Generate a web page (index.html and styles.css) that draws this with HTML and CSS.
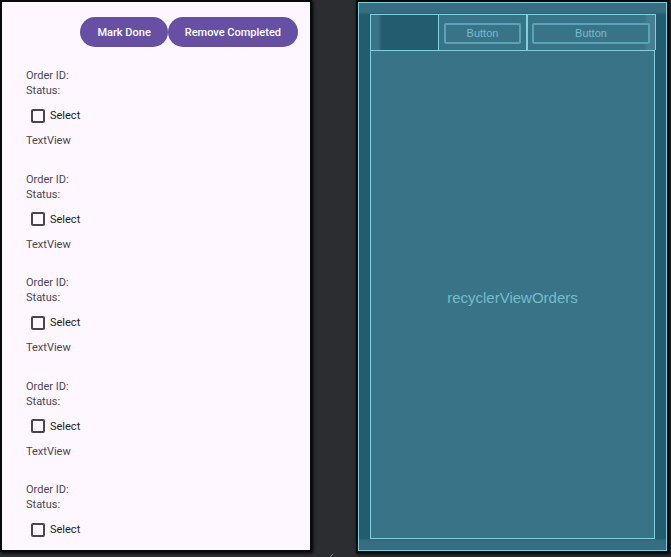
FILE: index.html
```html
<!DOCTYPE html>
<html lang="en">
<head>
<meta charset="utf-8">
<title>Order layout preview</title>
<link rel="stylesheet" href="styles.css">
</head>
<body>
<main class="editor">
  <section class="phone">
    <div class="actions">
      <button class="action" type="button">Mark Done</button>
      <button class="action" type="button">Remove Completed</button>
    </div>
    <ul class="orders">
      <li class="order">
        <p class="line">Order ID:</p>
        <p class="line">Status:</p>
        <label class="select"><input class="box" type="checkbox">Select</label>
        <p class="line">TextView</p>
      </li>
      <li class="order">
        <p class="line">Order ID:</p>
        <p class="line">Status:</p>
        <label class="select"><input class="box" type="checkbox">Select</label>
        <p class="line">TextView</p>
      </li>
      <li class="order">
        <p class="line">Order ID:</p>
        <p class="line">Status:</p>
        <label class="select"><input class="box" type="checkbox">Select</label>
        <p class="line">TextView</p>
      </li>
      <li class="order">
        <p class="line">Order ID:</p>
        <p class="line">Status:</p>
        <label class="select"><input class="box" type="checkbox">Select</label>
        <p class="line">TextView</p>
      </li>
      <li class="order">
        <p class="line">Order ID:</p>
        <p class="line">Status:</p>
        <label class="select"><input class="box" type="checkbox">Select</label>
      </li>
    </ul>
  </section>
  <section class="blueprint">
    <div class="blue-row">
      <div class="blue-space"></div>
      <div class="blue-cell"><button class="blue-button" type="button">Button</button></div>
      <div class="blue-cell blue-cell-end"><button class="blue-button" type="button">Button</button></div>
    </div>
    <div class="recycler">recyclerViewOrders</div>
  </section>
  <svg class="grip" viewBox="0 0 8 8" aria-hidden="true"><path d="M1 7L7 1M5 8L8 5" /></svg>
</main>
</body>
</html>
```
FILE: styles.css
```css
* {
  box-sizing: border-box;
}

body {
  margin: 0;
  background: #2b2d30;
  font-family: Roboto, "Liberation Sans", sans-serif;
}

.editor {
  position: relative;
  display: grid;
  grid-template-columns: 308fr 309fr;
  gap: 48px;
  height: 100vh;
  padding: 2px 4px 6px 2px;
  overflow: hidden;
}

.phone,
.blueprint {
  min-height: 0;
  box-shadow: 0 0 0 2px #08090b, 1px 1px 3px 2px #000;
}

.phone {
  margin-bottom: 1px;
  overflow: hidden;
  background: #fef7ff;
  color: #49454f;
}

.actions {
  display: flex;
  justify-content: flex-end;
  padding: 15px 12px 0 0;
}

.action {
  height: 30px;
  padding: 1px 17px 0;
  border: 0;
  border-radius: 15px;
  background: #6750a4;
  color: #fff;
  font: 500 11px/16px Roboto, "Liberation Sans", sans-serif;
}

.orders {
  display: grid;
  grid-template-rows: repeat(5, 1fr);
  height: 518px;
  margin: 21px 0 0;
  padding: 0 24px;
  list-style: none;
}

.line {
  margin: 0;
  font-size: 11px;
  line-height: 15px;
}

.select {
  display: flex;
  align-items: center;
  gap: 5px;
  height: 35px;
  padding-left: 5px;
  color: #1d1b20;
  font-size: 11px;
}

.box {
  appearance: none;
  width: 14px;
  height: 14px;
  margin: 0;
  border: 2px solid #49454f;
  border-radius: 2px;
}

.blueprint {
  display: flex;
  flex-direction: column;
  padding: 11px;
  border: 1px solid #7fcfe2;
  background: linear-gradient(#376d80, #376d80 9px, #235c6f 12px, #235c6f calc(100% - 12px), #376d80 calc(100% - 9px), #376d80);
  color: #74bdcf;
}

.blue-row {
  display: grid;
  grid-template-columns: 67fr 88fr 129fr;
  height: 36px;
  margin-right: -1px;
  border: 1px solid #7fcfe2;
  border-bottom: 0;
}

.blue-space {
  background: linear-gradient(90deg, #397488, #397488 7px, #235c6f 11px);
}

.blue-cell {
  padding: 7px 5px 6px 5px;
  border-left: 1px solid #7fcfe2;
  background: #397387;
}

.blue-cell-end {
  padding-left: 4px;
  border-left-width: 2px;
  background: linear-gradient(270deg, #467f91, #467f91 7px, #397387 11px);
}

.blue-button {
  width: 100%;
  height: 21px;
  padding: 0;
  border: 2px solid #5ba3b6;
  border-radius: 2px;
  background: #397387;
  color: inherit;
  font: 11px/15px "Liberation Sans", sans-serif;
}

.recycler {
  display: flex;
  flex: 1;
  align-items: center;
  justify-content: center;
  padding-top: 6px;
  border: 1px solid #7fcfe2;
  background: #397387;
  font-family: "Liberation Sans", sans-serif;
  font-size: 15px;
}

.grip {
  position: absolute;
  bottom: -4px;
  left: 326px;
  width: 8px;
  height: 8px;
  fill: none;
  stroke: #8a8c90;
}
```
